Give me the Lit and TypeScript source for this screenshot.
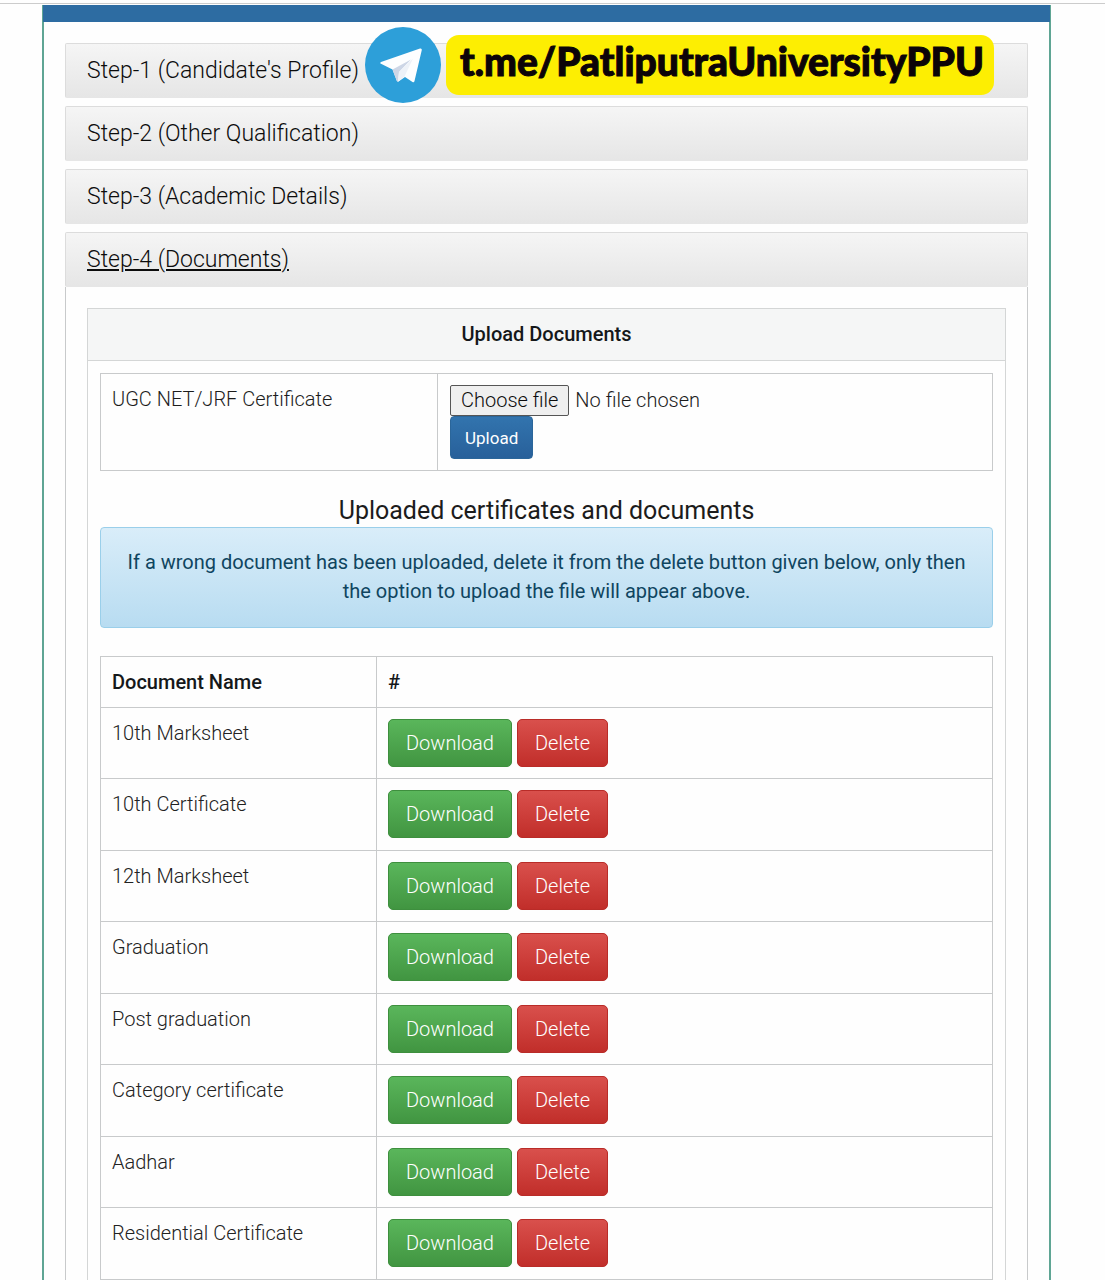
import { LitElement, html, css } from "lit";
import { customElement, property, state } from "lit/decorators.js";

@customElement("telegram-banner")
export class TelegramBanner extends LitElement {
  static styles = css`
    :host {
      display: flex;
      align-items: center;
      gap: 5px;
    }
    .logo {
      display: block;
      width: 76px;
      height: 76px;
      flex: none;
    }
    .link {
      display: block;
      padding: 0 10px 8px 14px;
      border-radius: 13px;
      background: #fdee02;
      color: #0c0408;
      font: 900 39px/52px Lato, "Liberation Sans", sans-serif;
      -webkit-text-stroke: 1px #0c0408;
      text-decoration: none;
      white-space: nowrap;
    }
  `;

  render() {
    return html`
      <svg class="logo" viewBox="0 0 76 76" aria-hidden="true">
        <circle cx="38" cy="38" r="38" fill="#2d9fd9" />
        <path d="M15.500 36.500Q14.500 36 16 35L55 21.500Q57 21 56.800 23L49.500 54Q49 56 47.500 55L40 50 33.500 54.500Q32 55 31.500 53L27.500 42.500Z" fill="#fdfeff" />
        <path d="M27.500 42.500 46 32.500 34 45 33 54.800Q32 55 31.500 53Z" fill="#cdd6e6" />
        <path d="M34 45 48 31.500 39.500 49.600 33 54.800Z" fill="#eef2f8" />
      </svg>
      <a class="link" href="https://t.me/PatliputraUniversityPPU">t.me/PatliputraUniversityPPU</a>
    `;
  }
}

@customElement("document-table")
export class DocumentTable extends LitElement {
  @property({ attribute: false }) documents: string[] = [];

  static styles = css`
    :host {
      display: block;
    }
    .table {
      width: 100%;
      border-collapse: collapse;
      table-layout: fixed;
      font-size: 20px;
      line-height: 28px;
    }
    .name-column {
      width: 276px;
    }
    .table th,
    .table td {
      border: 1px solid #c8cacb;
      padding: 11px;
      text-align: left;
      vertical-align: top;
    }
    .table th {
      font-weight: 500;
      color: #15181a;
    }
    .table td {
      font-weight: 300;
      color: #222;
    }
    .table tr:nth-child(even) td {
      padding-bottom: 12px;
    }
    .actions {
      display: flex;
      gap: 5px;
    }
    .button {
      height: 48px;
      box-sizing: border-box;
      border: 1px solid;
      border-radius: 5px;
      padding: 0 17px;
      color: #fff;
      font: 350 20px/28px Roboto, "Liberation Sans", sans-serif;
      cursor: pointer;
    }
    .download {
      border-color: #3e8f3e;
      background: linear-gradient(#5ab65b, #419541);
    }
    .delete {
      border-color: #b92c28;
      background: linear-gradient(#d9504c, #c12e2a);
    }
  `;

  render() {
    return html`
      <table class="table">
        <colgroup>
          <col class="name-column" />
          <col />
        </colgroup>
        <thead>
          <tr>
            <th scope="col">Document Name</th>
            <th scope="col">#</th>
          </tr>
        </thead>
        <tbody>
          ${this.documents.map(
            (name) => html`
              <tr>
                <td>${name}</td>
                <td>
                  <div class="actions">
                    <button class="button download" type="button">Download</button>
                    <button class="button delete" type="button">Delete</button>
                  </div>
                </td>
              </tr>
            `
          )}
        </tbody>
      </table>
    `;
  }
}

@customElement("app-root")
export class AppRoot extends LitElement {
  @state() private fileName = "No file chosen";

  private closedSteps = [
    "Step-1 (Candidate's Profile)",
    "Step-2 (Other Qualification)",
    "Step-3 (Academic Details)",
  ];

  private documents = [
    "10th Marksheet",
    "10th Certificate",
    "12th Marksheet",
    "Graduation",
    "Post graduation",
    "Category certificate",
    "Aadhar",
    "Residential Certificate",
  ];

  static styles = css`
    :host {
      display: block;
      min-height: 100vh;
      background: #fefefe;
      color: #1c1c1c;
      font-family: Roboto, "Liberation Sans", sans-serif;
    }
    .top-rule {
      height: 3px;
      border-bottom: 1px solid #ccc;
    }
    .frame {
      position: relative;
      margin: 1px 54px 0 42px;
      border: 2px solid #5fa594;
      border-top: 0;
    }
    .bar {
      height: 17px;
      margin: 0 -1px;
      background: #2d6ca2;
    }
    .banner {
      position: absolute;
      top: 22px;
      left: 321px;
    }
    .steps {
      display: flex;
      flex-direction: column;
      gap: 8px;
      padding: 21px 21px 0;
    }
    .heading {
      display: flex;
      align-items: center;
      box-sizing: border-box;
      height: 55px;
      margin: 0;
      padding: 0 21px;
      border: 1px solid #dcdcdc;
      border-bottom-color: #e6e6e6;
      border-radius: 2px;
      background: linear-gradient(#f5f5f5, #e6e6e6);
      font-size: 23px;
      line-height: 28px;
      font-weight: 300;
    }
    .heading a {
      color: #0c0c0c;
      text-decoration: none;
    }
    .heading .current {
      text-decoration: underline;
    }
    .step-body {
      padding: 21px 21px 0;
      border: 1px solid #c8cacb;
      border-width: 0 1px;
    }
    .panel {
      border: 1px solid #d4d6d6;
      border-bottom: 0;
    }
    .panel-title {
      margin: 0;
      padding: 11px;
      border-bottom: 1px solid #d4d6d6;
      background: #f5f6f6;
      font-size: 20px;
      line-height: 29px;
      font-weight: 500;
      text-align: center;
      color: #15181a;
    }
    .panel-body {
      padding: 12px 12px 0;
    }
    .upload-row {
      display: grid;
      grid-template-columns: 337px 1fr;
      border: 1px solid #c8cacb;
      font-size: 20px;
      line-height: 29px;
      font-weight: 300;
    }
    .upload-label {
      padding: 11px;
      border-right: 1px solid #c8cacb;
    }
    .upload-field {
      display: flex;
      flex-direction: column;
      align-items: flex-start;
      padding: 11px 12px;
    }
    .picker {
      position: relative;
      display: flex;
      align-items: center;
      gap: 6px;
    }
    .picker-input {
      position: absolute;
      inset: 0;
      width: 100%;
      opacity: 0;
      cursor: pointer;
    }
    .picker-button {
      padding: 0 10px;
      border: 1px solid #555;
      border-radius: 2px;
      background: #efefef;
      color: #0c0c0c;
    }
    .upload {
      height: 43px;
      padding: 0 14px;
      border: 1px solid #2b669a;
      border-radius: 4px;
      background: linear-gradient(#3274ae, #28609a);
      color: #fff;
      font: 400 17px/24px Roboto, "Liberation Sans", sans-serif;
      cursor: pointer;
    }
    .subtitle {
      margin: 24px 0 0;
      font-size: 25px;
      line-height: 32px;
      font-weight: 400;
      text-align: center;
    }
    .notice {
      margin: 0 0 28px;
      padding: 20px 24px 21px;
      border: 1px solid #9acfea;
      border-radius: 4px;
      background: linear-gradient(#d9edf9, #b8dcf1);
      color: #0f4560;
      font-size: 20px;
      line-height: 29px;
      font-weight: 400;
      text-align: center;
    }
  `;

  private onPick(event: Event) {
    const input = event.target as HTMLInputElement;
    this.fileName = input.files?.[0]?.name ?? "No file chosen";
  }

  render() {
    return html`
      <div class="top-rule"></div>
      <main class="frame">
        <div class="bar"></div>
        <div class="steps">
          ${this.closedSteps.map((title) => html`<h4 class="heading"><a href="#">${title}</a></h4>`)}
          <section>
            <h4 class="heading"><a class="current" href="#documents">Step-4 (Documents)</a></h4>
            <div class="step-body" id="documents">
              <div class="panel">
                <h5 class="panel-title">Upload Documents</h5>
                <div class="panel-body">
                  <form class="upload-row">
                    <label class="upload-label" for="certificate">UGC NET/JRF Certificate</label>
                    <div class="upload-field">
                      <div class="picker">
                        <span class="picker-button">Choose file</span>
                        <span>${this.fileName}</span>
                        <input class="picker-input" id="certificate" type="file" @change=${this.onPick} />
                      </div>
                      <button class="upload" type="button">Upload</button>
                    </div>
                  </form>
                  <h3 class="subtitle">Uploaded certificates and documents</h3>
                  <p class="notice">
                    If a wrong document has been uploaded, delete it from the delete button given below, only then
                    the option to upload the file will appear above.
                  </p>
                  <document-table .documents=${this.documents}></document-table>
                </div>
              </div>
            </div>
          </section>
        </div>
        <telegram-banner class="banner"></telegram-banner>
      </main>
    `;
  }
}
